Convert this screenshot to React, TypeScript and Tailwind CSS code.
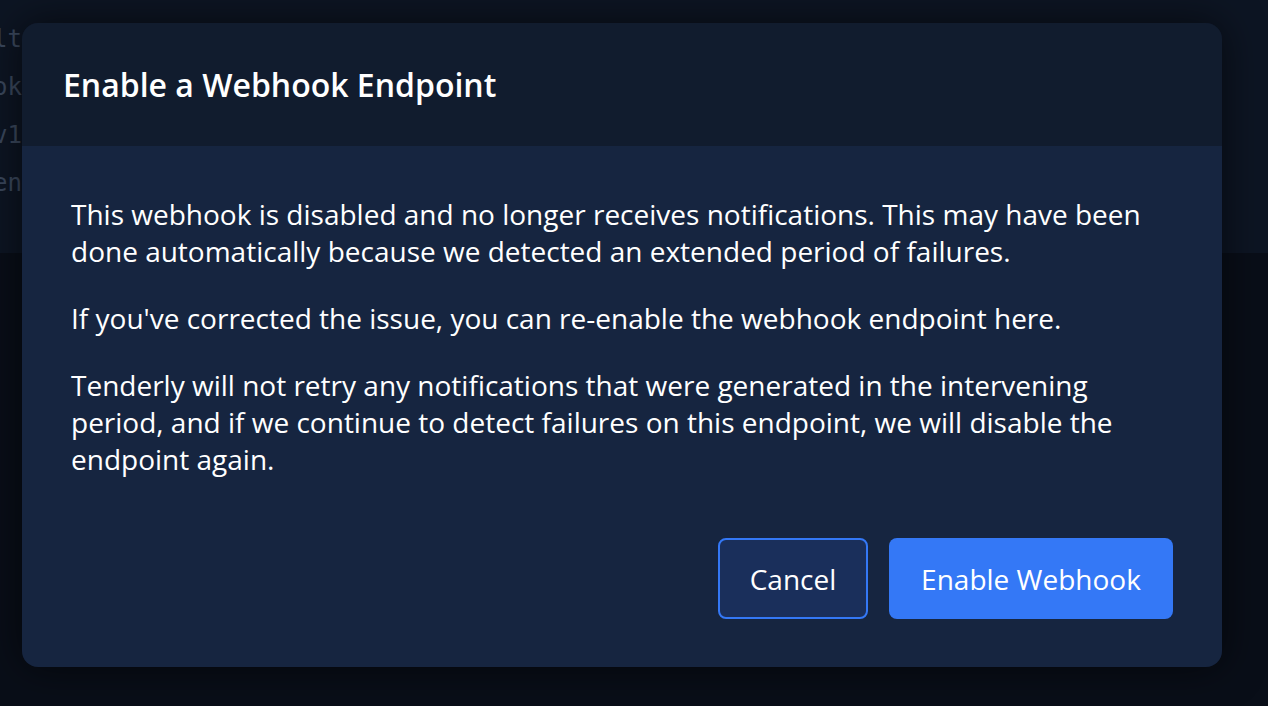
import React from 'react';

const paragraphs = [
  'This webhook is disabled and no longer receives notifications. This may have been done automatically because we detected an extended period of failures.',
  "If you've corrected the issue, you can re-enable the webhook endpoint here.",
  'Tenderly will not retry any notifications that were generated in the intervening period, and if we continue to detect failures on this endpoint, we will disable the endpoint again.',
];

const bgLines = ['Default', 'Webhook', 'v1', 'Token'];

const App = () => {
  return (
    <div className="relative w-[1268px] h-[706px] overflow-hidden bg-[#090e18] font-['Open_Sans',sans-serif]">
      {/* page behind the overlay */}
      <div className="h-[253px] bg-[#0d1523] pt-[20px] font-['DejaVu_Sans_Mono',monospace] text-[24px] text-[#3a475c]">
        <div className="flex flex-col gap-[10px] -ml-[80px] leading-[38px]">
          {bgLines.map((l) => (
            <div key={l} className="text-right w-[102px]">{l}</div>
          ))}
        </div>
      </div>

      {/* dialog */}
      <div className="absolute left-[22px] top-[23px] w-[1200px] rounded-[16px] overflow-hidden shadow-[0_0_40px_rgba(0,0,0,0.6)]">
        <div className="h-[123px] bg-[#111c2e] px-[41px] pt-[42px]">
          <h2 className="text-[32px] font-semibold leading-[40px] text-white">Enable a Webhook Endpoint</h2>
        </div>
        <div className="bg-[#162540] px-[49px] pt-[50px] pb-[48px]">
          <div className="flex flex-col gap-[30px] text-[28px] leading-[37px] text-white">
            {paragraphs.map((p) => (
              <p key={p.slice(0, 12)}>{p}</p>
            ))}
          </div>
          <div className="flex justify-end gap-[21px] mt-[60px]">
            <button className="h-[81px] w-[150px] rounded-[8px] border-2 border-[#3478f6] bg-[#1a2f5b] text-[28px] text-white">
              Cancel
            </button>
            <button className="h-[81px] w-[284px] rounded-[8px] bg-[#3478f6] text-[28px] text-white">
              Enable Webhook
            </button>
          </div>
        </div>
      </div>
    </div>
  );
};

export default App;
